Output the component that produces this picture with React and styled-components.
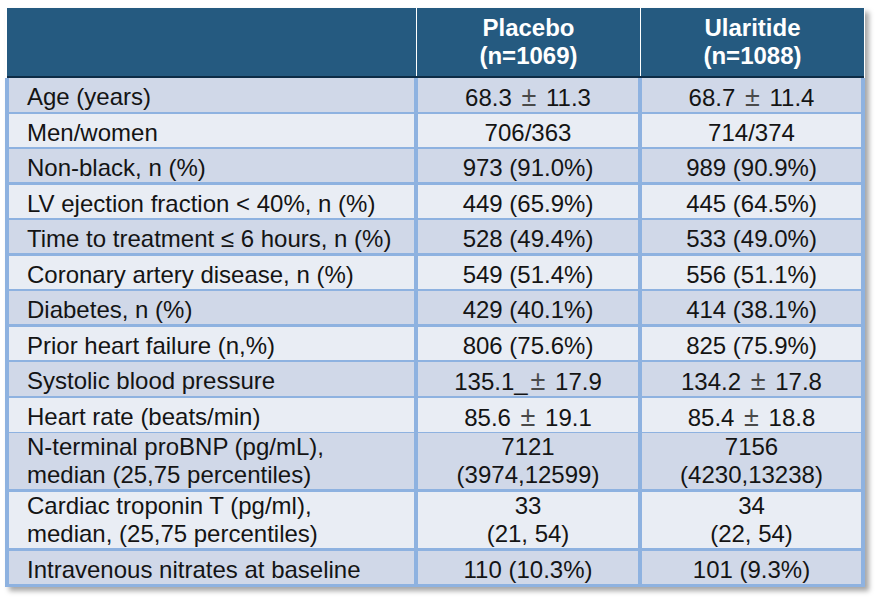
import React from 'react';
import styled, {createGlobalStyle} from 'styled-components';

const rows = [
  {label: 'Age (years)', placebo: '68.3 ± 11.3', ularitide: '68.7 ± 11.4'},
  {label: 'Men/women', placebo: '706/363', ularitide: '714/374'},
  {label: 'Non-black, n (%)', placebo: '973 (91.0%)', ularitide: '989 (90.9%)'},
  {label: 'LV ejection fraction < 40%, n (%)', placebo: '449 (65.9%)', ularitide: '445 (64.5%)'},
  {label: 'Time to treatment ≤ 6 hours, n (%)', placebo: '528 (49.4%)', ularitide: '533 (49.0%)'},
  {label: 'Coronary artery disease, n (%)', placebo: '549 (51.4%)', ularitide: '556 (51.1%)'},
  {label: 'Diabetes, n (%)', placebo: '429 (40.1%)', ularitide: '414 (38.1%)'},
  {label: 'Prior heart failure (n,%)', placebo: '806 (75.6%)', ularitide: '825 (75.9%)'},
  {label: 'Systolic blood pressure', placebo: '135.1_± 17.9', ularitide: '134.2 ± 17.8'},
  {label: 'Heart rate (beats/min)', placebo: '85.6 ± 19.1', ularitide: '85.4 ± 18.8'},
  {
    label: ['N-terminal proBNP (pg/mL),', 'median (25,75 percentiles)'],
    placebo: ['7121', '(3974,12599)'],
    ularitide: ['7156', '(4230,13238)'],
  },
  {
    label: ['Cardiac troponin T (pg/ml),', 'median, (25,75 percentiles)'],
    placebo: ['33', '(21, 54)'],
    ularitide: ['34', '(22, 54)'],
  },
  {label: 'Intravenous nitrates at baseline', placebo: '110 (10.3%)', ularitide: '101 (9.3%)'},
];

// splits "a ± b" so the plus-minus sign can be drawn a bit lighter and larger
const renderValue = (value) => {
  const lines = Array.isArray(value) ? value : [value];
  return lines.map((line, i) => {
    const parts = line.split('±');
    return (
      <Line key={i}>
        {parts.length > 1 ? (
          <>
            {parts[0]}
            <Pm>±</Pm>
            {parts[1]}
          </>
        ) : (
          line
        )}
      </Line>
    );
  });
};

const App = () => (
  <>
    <GlobalStyle />
    <Page>
      <Table>
        <Header>
          <HeadCell />
          <HeadCell>
            <Line>Placebo</Line>
            <Line>(n=1069)</Line>
          </HeadCell>
          <HeadCell>
            <Line>Ularitide</Line>
            <Line>(n=1088)</Line>
          </HeadCell>
        </Header>
        <Body>
          {rows.map((row, i) => {
            const tall = Array.isArray(row.label);
            const dark = i % 2 === 0;
            return (
              <Row key={i} $tall={tall}>
                <Cell $dark={dark} $tall={tall}>
                  {renderValue(row.label)}
                </Cell>
                <Cell $dark={dark} $tall={tall} $center>
                  {renderValue(row.placebo)}
                </Cell>
                <Cell $dark={dark} $tall={tall} $center>
                  {renderValue(row.ularitide)}
                </Cell>
              </Row>
            );
          })}
        </Body>
      </Table>
    </Page>
  </>
);

export default App;

const GlobalStyle = createGlobalStyle`
  body {
    margin: 0;
    background: #ffffff;
    font-family: "Liberation Sans", Arial, sans-serif;
  }
`;

const Page = styled.div`
  width: 883px;
  height: 600px;
  padding: 8px 0 0 5px;
  box-sizing: border-box;
`;

const Table = styled.div`
  width: 860px;
  box-shadow: 4px 4px 5px rgba(0, 0, 0, 0.35);
`;

const Header = styled.div`
  display: grid;
  grid-template-columns: 409px 224px 224px;
  margin: 0 1px 0 2px;
  height: 70px;
  background: #255a80;
  border-bottom: 2px solid #0d2c46;
  box-sizing: border-box;
`;

const HeadCell = styled.div`
  display: flex;
  flex-direction: column;
  align-items: center;
  padding-top: 6px;
  color: #ffffff;
  font-weight: bold;
  font-size: 24px;
  line-height: 28px;

  & + & {
    border-left: 1px solid #ffffff;
  }
`;

const Body = styled.div`
  display: flex;
  flex-direction: column;
  gap: 4px;
  padding: 0 4px 4px;
  background: #8eb2e0;
`;

const Row = styled.div`
  display: grid;
  grid-template-columns: 405px 220px 1fr;
  column-gap: 4px;
  height: ${(p) => (p.$tall ? '55px' : '31.5px')};
`;

const Cell = styled.div`
  display: flex;
  flex-direction: column;
  align-items: ${(p) => (p.$center ? 'center' : 'flex-start')};
  padding: ${(p) => (p.$tall ? '0' : '5px')} 0 0 ${(p) => (p.$center ? '0' : '18px')};
  background: ${(p) => (p.$dark ? '#d0d8e8' : '#e9edf4')};
  color: #141414;
  font-size: 24px;
  line-height: 28px;
  white-space: nowrap;
  min-width: 0;
`;

const Line = styled.span`
  display: block;
`;

const Pm = styled.span`
  color: #4a4a4a;
  font-size: 27px;
  line-height: 28px;
  margin: 0 3px;
`;
